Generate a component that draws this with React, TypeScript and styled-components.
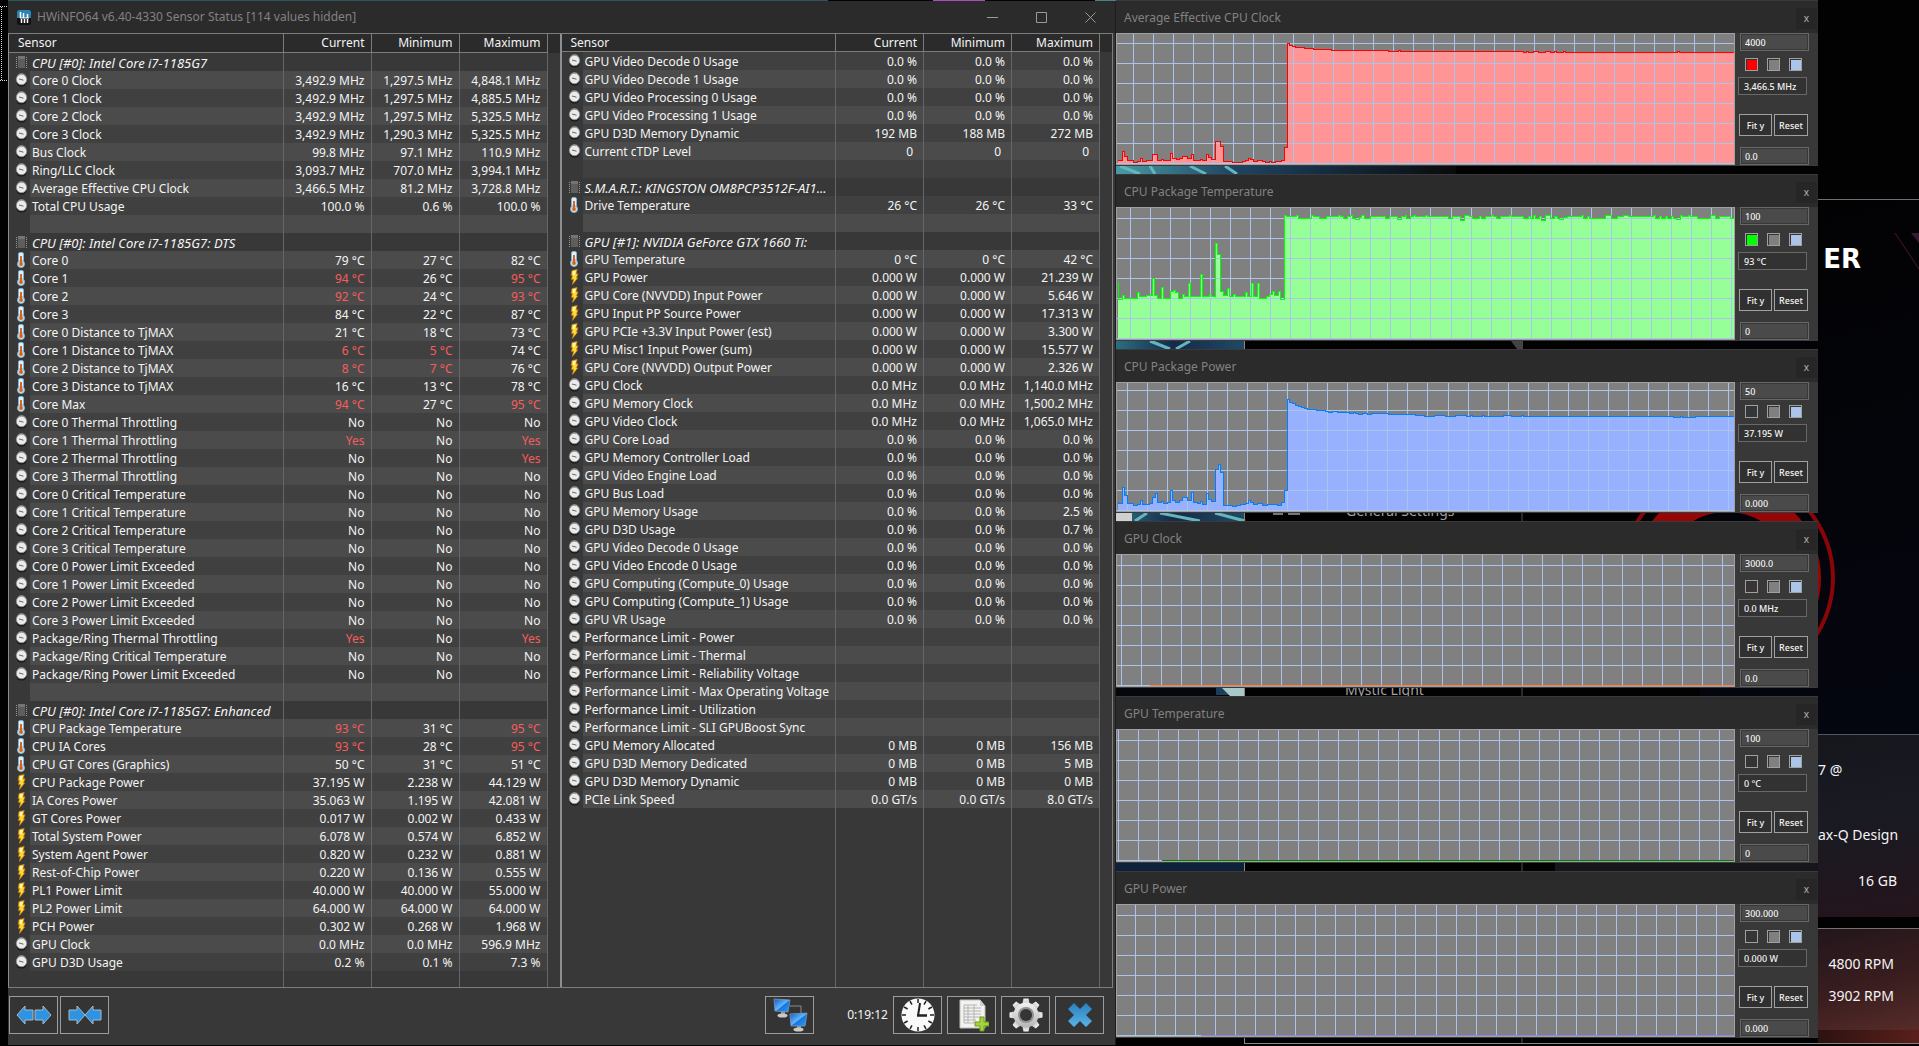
import React from "react";
import styled, { createGlobalStyle, css } from "styled-components";

const GlobalStyle = createGlobalStyle`
  * { box-sizing: border-box; }
  body { margin: 0; background: #020203; color: #f4f4f4; font-family: "Noto Sans", "Open Sans", sans-serif; font-size: 12px; }
  button, input { font-family: inherit; color: inherit; }
`;

/* ---------- desktop ---------- */

const Desktop = styled.div`
  position: relative;
  display: grid;
  grid-template-columns: minmax(0, 1108fr) minmax(0, 702fr) minmax(0, 101fr);
  min-height: 100vh;
  padding-left: 8px;
  overflow: hidden;
`;

const Wallpaper = styled.div`
  position: absolute;
  inset: 0;
  z-index: 0;
  svg { display: block; }
`;

const WallpaperLabel = styled.span<{ $x: number; $y: number }>`
  position: absolute;
  left: ${(p) => p.$x}px;
  top: ${(p) => p.$y}px;
  font-size: 14px;
  line-height: 20px;
  color: #a0a0a0;
  white-space: nowrap;
`;

/* ---------- sensor window ---------- */

const MainWindow = styled.main`
  position: relative;
  z-index: 1;
  display: flex;
  flex-direction: column;
  margin: 1px 0;
  background: #383838;
  border-right: 1px solid #1c1c1c;
`;

const TitleBar = styled.header`
  display: flex;
  align-items: center;
  height: 32px;
  padding-left: 9px;
  background: #2b2b2b;
  color: #828282;
`;

const WindowTitle = styled.h1`
  flex: 1;
  margin: 0 0 0 6px;
  font-size: 12px;
  line-height: 18px;
  font-weight: 400;
`;

const CaptionButton = styled.button`
  display: flex;
  align-items: center;
  justify-content: center;
  width: 49px;
  height: 30px;
  padding: 0;
  border: 0;
  background: transparent;
  color: #9a9a9a;
`;

const Panels = styled.div`
  flex: 1;
  display: grid;
  grid-template-columns: minmax(0, 552fr) minmax(0, 553fr);
  margin-right: 2px;
  border: 1px solid #7c7c7c;
  border-width: 1px 1px 1px 0;
`;

const Panel = styled.section`
  display: flex;
  flex-direction: column;
  border-left: 1px solid #8c8f92;
  & + & { border-left-width: 2px; }
`;

const SensorTable = styled.table`
  width: 100%;
  border-collapse: separate;
  border-spacing: 0;
  table-layout: fixed;
`;

const cellLine = css`border-right: 1px solid #63666a;`;

const HeadCell = styled.th<{ $left?: boolean; $tall?: boolean }>`
  height: ${(p) => (p.$tall ? 19 : 18)}px;
  padding: ${(p) => (p.$left ? "0 0 0 9px" : "0 6px 0 0")};
  background: #2b2b2b;
  border-right: 1px solid #7c7c7c;
  border-bottom: 1px solid #7c7c7c;
  font-weight: 400;
  line-height: 16px;
  text-align: ${(p) => (p.$left ? "left" : "right")};
`;

const GutterHead = styled.td`
  background: #2b2b2b;
  padding: 0;
`;

const IconCell = styled.td`
  height: 18px;
  padding: 0 0 0 6px;
  svg { display: block; }
`;

type Tone = "group" | "light" | "dark";
const tones: Record<Tone, string> = { group: "#383838", light: "#4b4b4b", dark: "#404040" };

const NameCell = styled.td<{ $tone: Tone }>`
  ${cellLine}
  height: 18px;
  padding: 2px 0 0 2px;
  overflow: hidden;
  white-space: nowrap;
  line-height: 16px;
  background: ${(p) => tones[p.$tone]};
  ${(p) => p.$tone === "group" && css`
    font-size: 13px;
    font-style: italic;
  `}
`;

const ValueCell = styled.td<{ $tone: Tone; $hot?: boolean; $unitless?: boolean }>`
  ${cellLine}
  height: 18px;
  padding: 2px ${(p) => (p.$unitless ? 10 : 6)}px 0 0;
  text-align: right;
  white-space: nowrap;
  line-height: 16px;
  color: ${(p) => (p.$hot ? "#f75d5d" : "#f4f4f4")};
  background: ${(p) => tones[p.$tone]};
`;

const ColumnTail = styled.div`
  flex: 1;
  display: grid;
  grid-template-columns: 1fr 88px 88px 88px 12px;
  min-height: 16px;
  span { ${cellLine} }
`;

const Toolbar = styled.footer`
  display: flex;
  align-items: center;
  gap: 5px;
  height: 57px;
  padding: 0 11px 4px 1px;
`;

const ToolButton = styled.button`
  display: flex;
  align-items: center;
  justify-content: center;
  width: 49px;
  height: 38px;
  padding: 0;
  border: 1px solid #9c9c9c;
  background: #343434;
`;

const ArrowPair = styled.div`
  flex: 1;
  display: flex;
  gap: 2px;
`;

const Uptime = styled.time`
  width: 69px;
  text-align: right;
  line-height: 18px;
`;

/* ---------- graph windows ---------- */

const GraphColumn = styled.div`
  position: relative;
  z-index: 1;
  display: flex;
  flex-direction: column;
  gap: 8px;
`;

const GraphWindow = styled.section`
  background: #383838;
  border-bottom: 1px solid #3c3c3c;
`;

const GraphTitleBar = styled.header`
  display: flex;
  align-items: center;
  height: 33px;
  padding: 2px 1px 0 8px;
  border-top: 1px solid #3a3a3a;
  background: #2b2b2b;
  color: #828282;
`;

const GraphTitle = styled.h2`
  flex: 1;
  margin: 0;
  font-size: 12px;
  line-height: 18px;
  font-weight: 400;
`;

const CloseButton = styled.button`
  width: 21px;
  height: 21px;
  padding: 0;
  border: 0;
  background: #262626;
  color: #b5b5b5;
  font-size: 10px;
  line-height: 18px;
`;

const GraphBody = styled.div<{ $h: number }>`
  display: flex;
  height: ${(p) => p.$h}px;
`;

const Plot = styled.div`
  flex: 1;
  min-width: 0;
  border: 1px solid #a0a0a0;
  background: #808080;
  svg { display: block; width: 100%; height: 100%; }
`;

const SidePanel = styled.div`
  display: flex;
  flex-direction: column;
  width: 83px;
  padding: 0 9px 0 3px;
`;

const RangeInput = styled.input`
  flex: none;
  width: 69px;
  height: 18px;
  margin-left: 2px;
  padding: 0 4px;
  border: 1px solid #686868;
  outline: 1px solid #383838;
  outline-offset: -2px;
  background: #4a4a4a;
  font-size: 9px;
  font-weight: 500;
`;

const ValueInput = styled(RangeInput)`
  margin: 6px 0 19px;
  outline: 0;
  padding: 0 5px;
  background: #323232;
`;

const Swatches = styled.div`
  display: flex;
  justify-content: space-between;
  margin: auto 7px 0 7px;
`;

const Swatch = styled.button<{ $color: string }>`
  width: 13px;
  height: 13px;
  padding: 0;
  border: 1px solid #a0a0a0;
  box-shadow: inset 1px 1px 0 #333;
  background: ${(p) => p.$color};
`;

const ButtonRow = styled.div`
  display: grid;
  grid-template-columns: 33px 34px;
  gap: 2px;
  margin: 0 0 11px 1px;
`;

const SmallButton = styled.button`
  height: 22px;
  padding: 0;
  border: 1px solid #a0a0a0;
  background: #303030;
  font-size: 9px;
  font-weight: 500;
`;

/* ---------- control centre visible at the right edge ---------- */

const SideColumn = styled.aside`
  position: relative;
  z-index: 1;
  display: flex;
  flex-direction: column;
  overflow: hidden;
  white-space: nowrap;
  font-size: 14px;
  line-height: 20px;
`;

const Hero = styled.div`
  height: 200px;
  border-bottom: 1px solid #6f6f6f;
`;

const Logo = styled.div`
  height: 534px;
  padding-top: 44px;
  font-family: "DejaVu Sans", sans-serif;
  font-size: 26px;
  line-height: 30px;
  font-weight: 700;
  color: #fff;
  display: flex;
  align-items: flex-start;
  span { width: 43px; direction: rtl; overflow: hidden; }
`;

const InfoPanel = styled.div`
  display: flex;
  flex-direction: column;
  height: 183px;
  padding: 25px 22px 0 0;
  border-top: 1px solid #55565a;
  background: linear-gradient(170deg, #16171d, #191a22 45%, #25141c);
`;

const InfoLine = styled.div<{ $space?: number; $right?: boolean }>`
  margin-bottom: ${(p) => p.$space ?? 0}px;
  text-align: ${(p) => (p.$right ? "right" : "left")};
`;

const FanPanel = styled.div`
  height: 102px;
  margin-top: 11px;
  padding: 25px 25px 0 0;
  border-top: 1px solid #77706f;
  background: linear-gradient(165deg, #22161b, #3a1d1f 55%, #562c29);
`;

const BaseGlow = styled.div`
  height: 14px;
  border-bottom: 1px solid #8a7f7c;
  background: linear-gradient(90deg, #2c1210, #5a1f1b);
`;

/* ---------- icons ---------- */

type IconKind = "chip" | "dial" | "temp" | "bolt";

const RowIcon = ({ kind }: { kind: IconKind }) => {
  if (kind === "chip")
    return (
      <svg width="13" height="16" viewBox="0 0 13 16">
        <rect x="3" y="2" width="7" height="12" fill="#5e5e5e" />
        <path d="M3 2h7v3H3z" fill="#747474" />
        <path d="M1.500 3v11M11.500 3v11" stroke="#999" strokeWidth="1" strokeDasharray="1 1" />
      </svg>
    );
  if (kind === "dial")
    return (
      <svg width="13" height="16" viewBox="0 0 13 16">
        <rect x="1.500" y="2" width="10" height="12.500" rx="4.500" fill="#1b1b1b" />
        <path d="M1.500 5.500C2 3 4 1.200 6.500 1.200S11 3 11.500 5.500z" fill="#9d9d9d" />
        <circle cx="6.500" cy="7.500" r="5.200" fill="#ebebe9" stroke="#8d8d8d" strokeWidth=".8" />
        <path d="M4 7l4.500 1.200" stroke="#666" strokeWidth="1" />
      </svg>
    );
  if (kind === "temp")
    return (
      <svg width="13" height="16" viewBox="0 0 13 16">
        <rect x="3.500" y=".5" width="5" height="12" rx="1.500" fill="#dff0f8" stroke="#7fb2d0" />
        <circle cx="6" cy="12" r="3.500" fill="#cfe6f2" stroke="#7fb2d0" />
        <path d="M6 4v8" stroke="#d9560e" strokeWidth="1.800" />
        <circle cx="6" cy="12" r="1.900" fill="#e0600f" />
      </svg>
    );
  return (
    <svg width="13" height="16" viewBox="0 0 13 16">
      <path d="M4 1.500L9.200.5L8 5l2-.3-1.500 4.300h1.200L4.500 15.500l1-5.200-2 .3.900-4.200-1.200.1z" fill="#ffd92e" stroke="#c87a14" strokeWidth=".7" />
      <path d="M5 2.300l2.800-.5-1 4-2 .5z" fill="#fff6c4" />
    </svg>
  );
};

const AppIcon = () => (
  <svg width="14" height="15" viewBox="0 0 14 15">
    <rect width="14" height="15" rx="2" fill="#111" />
    <path d="M0 2a2 2 0 012-2h10a2 2 0 012 2v6H0z" fill="#2f83b4" />
    <path d="M3.500 2v6M6.500 3v5M10.500 4v4" stroke="#fff" strokeWidth="1.500" fill="none" />
    <path d="M3 8h9" stroke="#fff" />
    <path d="M4.500 9v4M7.500 9v4M10.500 9v4" stroke="#fff" strokeWidth="1.500" />
  </svg>
);

const blueArrow = { fill: "#2f93e4", stroke: "#a9b9c4", strokeWidth: 1 };

const ExpandIcon = () => (
  <svg width="36" height="20" viewBox="0 0 36 20">
    <path d="M1 10l8-9v4h8v10H9v4z" {...blueArrow} />
    <path d="M35 10l-8-9v4h-8v10h8v4z" {...blueArrow} />
  </svg>
);

const CollapseIcon = () => (
  <svg width="36" height="20" viewBox="0 0 36 20">
    <path d="M18 10l-8-9v4H2v10h8v4z" {...blueArrow} />
    <path d="M18 10l8-9v4h8v10h-8v4z" {...blueArrow} />
  </svg>
);

const NetworkIcon = () => (
  <svg width="36" height="36" viewBox="0 0 36 36">
    <defs>
      <linearGradient id="screen" x1="0" y1="0" x2="1" y2="1">
        <stop offset="0" stopColor="#0b58c4" />
        <stop offset=".5" stopColor="#62b6ff" />
        <stop offset=".55" stopColor="#1676dc" />
        <stop offset="1" stopColor="#2f9cf5" />
      </linearGradient>
    </defs>
    <path d="M18 9h11v9" stroke="#8b8b8b" fill="none" />
    <path d="M9 14h4v4H9z" fill="#9a9a9a" />
    <ellipse cx="10.500" cy="18.500" rx="5" ry="2" fill="#c9c9c9" />
    <path d="M2 2l16 1-2 12-13-1z" fill="url(#screen)" stroke="#7f98b5" strokeWidth=".8" />
    <path d="M25 28h4v4h-4z" fill="#9a9a9a" />
    <ellipse cx="26.500" cy="32.500" rx="5" ry="2" fill="#c9c9c9" />
    <path d="M18 17l17-1-2 13-14 0z" fill="url(#screen)" stroke="#7f98b5" strokeWidth=".8" />
  </svg>
);

const ClockIcon = () => (
  <svg width="34" height="34" viewBox="0 0 34 34">
    <circle cx="17" cy="17" r="16.500" fill="#fafafa" />
    {Array.from({ length: 12 }, (_, i) => (
      <path key={i} d="M17 1v4" stroke="#222" strokeWidth="1.500" transform={`rotate(${i * 30} 17 17)`} />
    ))}
    <path d="M17 18L19 5" stroke="#222" strokeWidth="2" />
    <path d="M16 17.500h10" stroke="#222" strokeWidth="2.500" />
  </svg>
);

const ReportIcon = () => (
  <svg width="34" height="34" viewBox="0 0 34 34">
    <path d="M5 2h20l5 6v22H5z" fill="#f2f2f0" stroke="#bdbdbd" />
    <path d="M25 2v6h5z" fill="#cfcfcf" />
    <path d="M9 7h13M9 10h17M9 13h17M9 16h17M9 19h17M9 22h12M9 25h10M9 7v18M13 7v18M19 7v18" stroke="#b4b4b4" fill="none" />
    <path d="M25 19h4v5h5v4h-5v5h-4v-5h-5v-4h5z" fill="#a6d33a" stroke="#6d9a1b" />
  </svg>
);

const GearIcon = () => (
  <svg width="36" height="36" viewBox="0 0 36 36">
    <defs>
      <linearGradient id="steel" x1="0" y1="0" x2="0" y2="1">
        <stop offset="0" stopColor="#f2f2f0" />
        <stop offset="1" stopColor="#b4b6b4" />
      </linearGradient>
    </defs>
    <g fill="url(#steel)">
      {Array.from({ length: 8 }, (_, i) => (
        <path key={i} d="M15.500 1.500h5l1.500 7h-8z" transform={`rotate(${i * 45} 18 18)`} />
      ))}
      <circle cx="18" cy="18" r="12.500" />
    </g>
    <circle cx="18" cy="18" r="8" fill="#8f9290" />
    <circle cx="18" cy="18" r="6" fill="#343434" />
  </svg>
);

const CrossIcon = () => (
  <svg width="26" height="26" viewBox="0 0 26 26">
    <defs>
      <linearGradient id="cross" x1="0" y1="0" x2="0" y2="1">
        <stop offset="0" stopColor="#2b7fb8" />
        <stop offset="1" stopColor="#5ab4ea" />
      </linearGradient>
    </defs>
    <path d="M7 1l6 6 6-6 6 6-6 6 6 6-6 6-6-6-6 6-6-6 6-6-6-6z" fill="url(#cross)" />
  </svg>
);

/* ---------- sensor data ---------- */

type Row = { icon?: IconKind; name: string; values: string[]; group?: boolean };

const kinds: Record<string, IconKind> = { d: "dial", t: "temp", b: "bolt" };

/* Lines are "kind|name|current|minimum|maximum"; "#name" opens a group, an empty line is a spacer.
   A value that starts with "!" is drawn as an alert. */
const parse = (text: string): Row[] =>
  text.split("\n").map((line) => {
    if (line.startsWith("#")) return { icon: "chip", name: line.slice(1), values: ["", "", ""], group: true };
    const [kind, name = "", ...values] = line.split("|");
    return { icon: kinds[kind], name, values: [0, 1, 2].map((i) => values[i] ?? "") };
  });

const leftRows = parse(`#CPU [#0]: Intel Core i7-1185G7
d|Core 0 Clock|3,492.9 MHz|1,297.5 MHz|4,848.1 MHz
d|Core 1 Clock|3,492.9 MHz|1,297.5 MHz|4,885.5 MHz
d|Core 2 Clock|3,492.9 MHz|1,297.5 MHz|5,325.5 MHz
d|Core 3 Clock|3,492.9 MHz|1,290.3 MHz|5,325.5 MHz
d|Bus Clock|99.8 MHz|97.1 MHz|110.9 MHz
d|Ring/LLC Clock|3,093.7 MHz|707.0 MHz|3,994.1 MHz
d|Average Effective CPU Clock|3,466.5 MHz|81.2 MHz|3,728.8 MHz
d|Total CPU Usage|100.0 %|0.6 %|100.0 %

#CPU [#0]: Intel Core i7-1185G7: DTS
t|Core 0|79 °C|27 °C|82 °C
t|Core 1|!94 °C|26 °C|!95 °C
t|Core 2|!92 °C|24 °C|!93 °C
t|Core 3|84 °C|22 °C|87 °C
t|Core 0 Distance to TjMAX|21 °C|18 °C|73 °C
t|Core 1 Distance to TjMAX|!6 °C|!5 °C|74 °C
t|Core 2 Distance to TjMAX|!8 °C|!7 °C|76 °C
t|Core 3 Distance to TjMAX|16 °C|13 °C|78 °C
t|Core Max|!94 °C|27 °C|!95 °C
d|Core 0 Thermal Throttling|No|No|No
d|Core 1 Thermal Throttling|!Yes|No|!Yes
d|Core 2 Thermal Throttling|No|No|!Yes
d|Core 3 Thermal Throttling|No|No|No
d|Core 0 Critical Temperature|No|No|No
d|Core 1 Critical Temperature|No|No|No
d|Core 2 Critical Temperature|No|No|No
d|Core 3 Critical Temperature|No|No|No
d|Core 0 Power Limit Exceeded|No|No|No
d|Core 1 Power Limit Exceeded|No|No|No
d|Core 2 Power Limit Exceeded|No|No|No
d|Core 3 Power Limit Exceeded|No|No|No
d|Package/Ring Thermal Throttling|!Yes|No|!Yes
d|Package/Ring Critical Temperature|No|No|No
d|Package/Ring Power Limit Exceeded|No|No|No

#CPU [#0]: Intel Core i7-1185G7: Enhanced
t|CPU Package Temperature|!93 °C|31 °C|!95 °C
t|CPU IA Cores|!93 °C|28 °C|!95 °C
t|CPU GT Cores (Graphics)|50 °C|31 °C|51 °C
b|CPU Package Power|37.195 W|2.238 W|44.129 W
b|IA Cores Power|35.063 W|1.195 W|42.081 W
b|GT Cores Power|0.017 W|0.002 W|0.433 W
b|Total System Power|6.078 W|0.574 W|6.852 W
b|System Agent Power|0.820 W|0.232 W|0.881 W
b|Rest-of-Chip Power|0.220 W|0.136 W|0.555 W
b|PL1 Power Limit|40.000 W|40.000 W|55.000 W
b|PL2 Power Limit|64.000 W|64.000 W|64.000 W
b|PCH Power|0.302 W|0.268 W|1.968 W
d|GPU Clock|0.0 MHz|0.0 MHz|596.9 MHz
d|GPU D3D Usage|0.2 %|0.1 %|7.3 %`);

const rightRows = parse(`d|GPU Video Decode 0 Usage|0.0 %|0.0 %|0.0 %
d|GPU Video Decode 1 Usage|0.0 %|0.0 %|0.0 %
d|GPU Video Processing 0 Usage|0.0 %|0.0 %|0.0 %
d|GPU Video Processing 1 Usage|0.0 %|0.0 %|0.0 %
d|GPU D3D Memory Dynamic|192 MB|188 MB|272 MB
d|Current cTDP Level|0|0|0

#S.M.A.R.T.: KINGSTON OM8PCP3512F-AI1...
t|Drive Temperature|26 °C|26 °C|33 °C

#GPU [#1]: NVIDIA GeForce GTX 1660 Ti:
t|GPU Temperature|0 °C|0 °C|42 °C
b|GPU Power|0.000 W|0.000 W|21.239 W
b|GPU Core (NVVDD) Input Power|0.000 W|0.000 W|5.646 W
b|GPU Input PP Source Power|0.000 W|0.000 W|17.313 W
b|GPU PCIe +3.3V Input Power (est)|0.000 W|0.000 W|3.300 W
b|GPU Misc1 Input Power (sum)|0.000 W|0.000 W|15.577 W
b|GPU Core (NVVDD) Output Power|0.000 W|0.000 W|2.326 W
d|GPU Clock|0.0 MHz|0.0 MHz|1,140.0 MHz
d|GPU Memory Clock|0.0 MHz|0.0 MHz|1,500.2 MHz
d|GPU Video Clock|0.0 MHz|0.0 MHz|1,065.0 MHz
d|GPU Core Load|0.0 %|0.0 %|0.0 %
d|GPU Memory Controller Load|0.0 %|0.0 %|0.0 %
d|GPU Video Engine Load|0.0 %|0.0 %|0.0 %
d|GPU Bus Load|0.0 %|0.0 %|0.0 %
d|GPU Memory Usage|0.0 %|0.0 %|2.5 %
d|GPU D3D Usage|0.0 %|0.0 %|0.7 %
d|GPU Video Decode 0 Usage|0.0 %|0.0 %|0.0 %
d|GPU Video Encode 0 Usage|0.0 %|0.0 %|0.0 %
d|GPU Computing (Compute_0) Usage|0.0 %|0.0 %|0.0 %
d|GPU Computing (Compute_1) Usage|0.0 %|0.0 %|0.0 %
d|GPU VR Usage|0.0 %|0.0 %|0.0 %
d|Performance Limit - Power
d|Performance Limit - Thermal
d|Performance Limit - Reliability Voltage
d|Performance Limit - Max Operating Voltage
d|Performance Limit - Utilization
d|Performance Limit - SLI GPUBoost Sync
d|GPU Memory Allocated|0 MB|0 MB|156 MB
d|GPU D3D Memory Dedicated|0 MB|0 MB|5 MB
d|GPU D3D Memory Dynamic|0 MB|0 MB|0 MB
d|PCIe Link Speed|0.0 GT/s|0.0 GT/s|8.0 GT/s`);

const SensorPanel = ({ rows, tall }: { rows: Row[]; tall?: boolean }) => (
  <Panel>
    <SensorTable>
      <colgroup>
        <col style={{ width: 21 }} />
        <col />
        <col style={{ width: 88 }} />
        <col style={{ width: 88 }} />
        <col style={{ width: 88 }} />
        <col style={{ width: 12 }} />
      </colgroup>
      <thead>
        <tr>
          <HeadCell $left $tall={tall} colSpan={2}>Sensor</HeadCell>
          <HeadCell $tall={tall}>Current</HeadCell>
          <HeadCell $tall={tall}>Minimum</HeadCell>
          <HeadCell $tall={tall}>Maximum</HeadCell>
          <GutterHead />
        </tr>
      </thead>
      <tbody>
        {rows.map((row, i) => {
          const tone: Tone = row.group ? "group" : i % 2 ? "light" : "dark";
          return (
            <tr key={i}>
              <IconCell>{row.icon && <RowIcon kind={row.icon} />}</IconCell>
              <NameCell $tone={tone}>{row.name}</NameCell>
              {row.values.map((v, k) => (
                <ValueCell key={k} $tone={tone} $hot={v.startsWith("!")} $unitless={v === "0"}>
                  {v.replace("!", "")}
                </ValueCell>
              ))}
              <td />
            </tr>
          );
        })}
      </tbody>
    </SensorTable>
    <ColumnTail>
      <span /><span /><span /><span />
    </ColumnTail>
  </Panel>
);

/* ---------- graph data ---------- */

/* Samples are "x:y" steps on a 3x oversampled trace; each level holds until the next x. */
type Trace = { samples: string; top: number };

const clockTrace: Trace = {
  top: 34,
  samples:
    "20:481 37:454 43:469 52:481 70:487 82:484 91:475 97:484 109:481 127:463 142:481 154:478 160:481 181:460 187:475 199:478 208:475 217:469 232:475 244:463 250:481 270:478 276:481 289:463 295:472 304:478 316:424 331:439 340:484 367:487 397:484 406:481 415:475 421:478 430:484 442:481 457:484 466:487 478:484 484:487 496:484 514:481 523:442 532:130 538:136 547:139 556:142 583:145 610:148 664:151 835:154 865:151 871:154 1240:157 1250:154 1256:157 1270:154 1286:157 1306:154 1322:157 1333:154 1339:157 1360:154 1366:157 1702:154 1708:157",
};

const tempTrace: Trace = {
  top: 208,
  samples:
    "20:847 25:898 37:886 43:895 82:877 88:889 109:886 127:835 133:886 142:895 154:862 160:895 181:874 190:871 196:877 205:895 217:883 223:889 235:850 241:889 271:823 277:889 298:883 304:889 316:730 322:763 331:874 340:886 352:865 358:889 370:883 376:889 406:877 412:889 424:850 430:889 442:850 448:895 469:889 478:883 487:874 493:886 505:874 511:898 523:646 530:649 559:646 565:655 604:646 610:649 628:655 649:649 685:646 691:649 700:655 712:649 721:646 727:655 736:658 748:652 754:646 763:655 781:649 826:655 838:649 862:658 874:649 886:646 889:655 901:649 910:646 916:649 946:646 952:649 1015:655 1027:649 1051:661 1063:646 1078:649 1087:655 1108:649 1114:655 1126:649 1144:646 1150:649 1159:655 1171:649 1198:646 1204:649 1240:655 1255:649 1261:655 1270:646 1276:655 1288:649 1294:661 1306:646 1321:655 1333:649 1342:655 1348:658 1360:652 1372:649 1414:646 1420:655 1432:649 1438:655 1486:646 1504:655 1522:650 1540:646 1555:649 1631:646 1637:655 1648:649 1654:655 1666:649 1672:655 1684:649 1690:655 1699:658 1711:646 1717:649 1735:646 1741:649 1762:655 1802:646 1816:655 1828:649 1861:655",
};

const powerTrace: Trace = {
  top: 38,
  samples:
    "20:472 25:475 37:427 43:451 52:475 70:481 82:478 91:466 97:478 118:475 127:457 136:445 142:472 154:469 160:475 172:472 181:436 187:466 196:472 208:466 217:457 232:466 244:442 250:472 262:475 271:469 277:478 289:445 295:463 304:469 316:373 325:358 331:382 340:481 367:484 379:481 391:478 406:475 415:466 421:472 430:478 442:475 457:481 472:478 502:481 514:472 523:436 532:163 538:172 547:175 556:181 565:184 574:187 583:190 592:193 619:196 646:199 655:202 667:199 682:202 718:205 730:203 736:205 745:208 757:205 772:208 784:205 835:208 916:211 943:214 973:211 1006:214 1036:211 1069:214 1081:211 1087:214 1117:211 1123:214 1180:211 1204:214 1234:211 1240:214 1690:217 1711:214 1716:217 1757:214",
};

type Graph = {
  title: string;
  max: string;
  min: string;
  value: string;
  height: number;
  gridStart: number;
  swatch: string;
  line: string;
  fill?: string;
  trace?: Trace;
  flatFrom?: number;
};

const graphs: Graph[] = [
  { title: "Average Effective CPU Clock", max: "4000", min: "0.0", value: "3,466.5 MHz", height: 132, gridStart: 16, swatch: "#ff0000", line: "#ff0000", fill: "#ff9595", trace: clockTrace },
  { title: "CPU Package Temperature", max: "100", min: "0", value: "93 °C", height: 133, gridStart: 13, swatch: "#00ff00", line: "#00ff00", fill: "#97ff97", trace: tempTrace },
  { title: "CPU Package Power", max: "50", min: "0.000", value: "37.195 W", height: 130, gridStart: 10, swatch: "#32373a", line: "#0080ff", fill: "#97b1ff", trace: powerTrace },
  { title: "GPU Clock", max: "3000.0", min: "0.0", value: "0.0 MHz", height: 133, gridStart: 4, swatch: "#3a3535", line: "#ff7f40", flatFrom: 32 },
  { title: "GPU Temperature", max: "100", min: "0", value: "0 °C", height: 133, gridStart: 1, swatch: "#333533", line: "#008000", flatFrom: 44 },
  { title: "GPU Power", max: "300.000", min: "0.000", value: "0.000 W", height: 133, gridStart: -2, swatch: "#353538", line: "#8c86e6", flatFrom: 83 },
];

const PLOT_WIDTH = 2400;

const stepPath = ({ samples, top }: Trace) => {
  const pts = samples.split(" ").map((s) => {
    const [x, y] = s.split(":").map(Number);
    return [Math.max(0, Math.floor(x / 3) - 7), Math.floor(y / 3) - top];
  });
  return pts.map(([x, y], i) => (i ? `H${x}V${y}` : `M${x} ${y}`)).join("") + `H${PLOT_WIDTH}`;
};

const GraphPlot = ({ graph }: { graph: Graph }) => {
  const base = graph.height - 3;
  const path = graph.trace && stepPath(graph.trace);
  const columns = Array.from({ length: 110 }, (_, k) => graph.gridStart + k * 20 + (k > 15 ? 1 : 0));
  const rows = Array.from({ length: 7 }, (_, k) => base - k * 20);
  return (
    <svg role="img" aria-label={`${graph.title} history`}>
      <g transform="translate(.5 .5)" fill="none" shapeRendering="crispEdges">
        {path && <path d={`${path}V${base}H0Z`} fill={graph.fill} />}
        <path
          d={columns.map((x) => `M${x} -1V${base}`).join("") + rows.map((y) => `M-1 ${y}H${PLOT_WIDTH}`).join("")}
          stroke="#abc4ea"
        />
        {path && <path d={path} stroke={graph.line} />}
        {graph.flatFrom !== undefined && <path d={`M${graph.flatFrom} ${base}H${PLOT_WIDTH}`} stroke={graph.line} />}
      </g>
    </svg>
  );
};

const GraphView = ({ graph }: { graph: Graph }) => (
  <GraphWindow>
    <GraphTitleBar>
      <GraphTitle>{graph.title}</GraphTitle>
      <CloseButton aria-label={`Close ${graph.title}`}>x</CloseButton>
    </GraphTitleBar>
    <GraphBody $h={graph.height}>
      <Plot><GraphPlot graph={graph} /></Plot>
      <SidePanel>
        <RangeInput aria-label={`${graph.title} maximum`} defaultValue={graph.max} />
        <Swatches>
          <Swatch $color={graph.swatch} aria-label="Line colour" />
          <Swatch $color="#808080" aria-label="Background colour" />
          <Swatch $color="#abc4ea" aria-label="Grid colour" />
        </Swatches>
        <ValueInput aria-label={`${graph.title} value`} value={graph.value} readOnly />
        <ButtonRow>
          <SmallButton>Fit y</SmallButton>
          <SmallButton>Reset</SmallButton>
        </ButtonRow>
        <RangeInput aria-label={`${graph.title} minimum`} defaultValue={graph.min} />
      </SidePanel>
    </GraphBody>
  </GraphWindow>
);

const WallpaperArt = () => (
  <svg width="100%" height="100%">
    <defs>
      <linearGradient id="sky" x1="0" x2="1">
        <stop offset="0" stopColor="#2a6f80" />
        <stop offset=".45" stopColor="#17294a" />
        <stop offset="1" stopColor="#1d4a66" />
      </linearGradient>
      <linearGradient id="fade" x1="0" x2="1">
        <stop offset="0" stopColor="#4a9aa5" />
        <stop offset=".35" stopColor="#1e4463" />
        <stop offset="1" stopColor="#0a0a0c" />
      </linearGradient>
      <linearGradient id="deep" x1="0" y1="0" x2="1" y2="1">
        <stop offset="0" stopColor="#020203" />
        <stop offset="1" stopColor="#070a1a" />
      </linearGradient>
    </defs>
    <rect x="1700" y="200" width="100%" height="534" fill="url(#deep)" />
    <rect x="8" width="820" height="1" fill="#2c5560" />
    <rect x="933" width="52" height="1" fill="#b04ac0" />
    <rect x="1095" width="350" height="1" fill="#4d7f88" />
    <rect x="1116" y="160" width="340" height="20" fill="url(#fade)" />
    <rect x="1116" y="335" width="128" height="360" fill="url(#sky)" />
    <path d="M1120 166l20 8M1150 166l5 8M1190 166l16 8M1225 166l12 8M1150 341l20 8M1190 341l-14 8M1135 521l12-8M1160 513l40 8M1215 513l30 8" stroke="#65b5bd" strokeWidth="3" />
    <rect x="1116" y="510" width="16" height="14" fill="#d0d0d0" />
    <rect x="1116" y="688" width="100" height="8" fill="#05070d" />
    <path d="M1222 688l8 8h14v-8z" fill="#a9c8c8" />
    <rect x="1116" y="860" width="128" height="14" fill="#0d2138" />
    <path d="M1244.500 341v8M1244.500 513v8M1244.500 688v8M1244.500 863v8M1244.500 1038v5" stroke="#888" />
    <path d="M1244 1043.500H1919" stroke="#888" />
    <path d="M1522 341v702" stroke="#2a2a2a" strokeWidth="2" />
    <path d="M1273 513h10v2h-10zM1288 513h12v2h-12z" fill="#777" />
    <path d="M1511 341h12v8h-6z" fill="#444" />
    <rect x="1555" y="863" width="263" height="8" fill="#17171b" />
    <circle cx="1727" cy="578" r="80" stroke="#960606" strokeWidth="28" fill="none" />
    <circle cx="1727" cy="578" r="106" stroke="#8a0508" strokeWidth="4" fill="none" />
    <path d="M1895 233l24 36" stroke="#4a1824" strokeWidth="1" />
    <path d="M1911 233h8v10z" fill="#351a30" />
    <path d="M0 6.500h7M1.500 7v74M0 80.500h7" stroke="#ddd" strokeDasharray="1 1" />
  </svg>
);

export default function App() {
  return (
    <>
      <GlobalStyle />
      <Desktop>
        <Wallpaper>
          <WallpaperArt />
          <WallpaperLabel $x={1346} $y={501}>General Settings</WallpaperLabel>
          <WallpaperLabel $x={1345} $y={680}>Mystic Light</WallpaperLabel>
        </Wallpaper>
        <MainWindow>
          <TitleBar>
            <AppIcon />
            <WindowTitle>HWiNFO64 v6.40-4330 Sensor Status [114 values hidden]</WindowTitle>
            <CaptionButton aria-label="Minimize">
              <svg width="11" height="11"><path d="M0 5.500h11" stroke="currentColor" /></svg>
            </CaptionButton>
            <CaptionButton aria-label="Maximize">
              <svg width="11" height="11"><path d="M.5.500h10v10H.5z" stroke="currentColor" fill="none" /></svg>
            </CaptionButton>
            <CaptionButton aria-label="Close">
              <svg width="11" height="11"><path d="M.5.500l10 10M10.500.500l-10 10" stroke="currentColor" /></svg>
            </CaptionButton>
          </TitleBar>
          <Panels>
            <SensorPanel rows={leftRows} tall />
            <SensorPanel rows={rightRows} />
          </Panels>
          <Toolbar>
            <ArrowPair>
              <ToolButton aria-label="Expand columns"><ExpandIcon /></ToolButton>
              <ToolButton aria-label="Collapse columns"><CollapseIcon /></ToolButton>
            </ArrowPair>
            <ToolButton aria-label="Remote monitoring"><NetworkIcon /></ToolButton>
            <Uptime>0:19:12</Uptime>
            <ToolButton aria-label="Reset clock"><ClockIcon /></ToolButton>
            <ToolButton aria-label="Log to file"><ReportIcon /></ToolButton>
            <ToolButton aria-label="Settings"><GearIcon /></ToolButton>
            <ToolButton aria-label="Close sensors"><CrossIcon /></ToolButton>
          </Toolbar>
        </MainWindow>
        <GraphColumn>
          {graphs.map((g) => <GraphView key={g.title} graph={g} />)}
        </GraphColumn>
        <SideColumn>
          <Hero />
          <Logo><span>ER</span></Logo>
          <InfoPanel>
            <InfoLine $space={45}>7 @</InfoLine>
            <InfoLine $space={26}>ax-Q Design</InfoLine>
            <InfoLine $right>16 GB</InfoLine>
          </InfoPanel>
          <FanPanel>
            <InfoLine $right $space={12}>4800 RPM</InfoLine>
            <InfoLine $right>3902 RPM</InfoLine>
          </FanPanel>
          <BaseGlow />
        </SideColumn>
      </Desktop>
    </>
  );
}
